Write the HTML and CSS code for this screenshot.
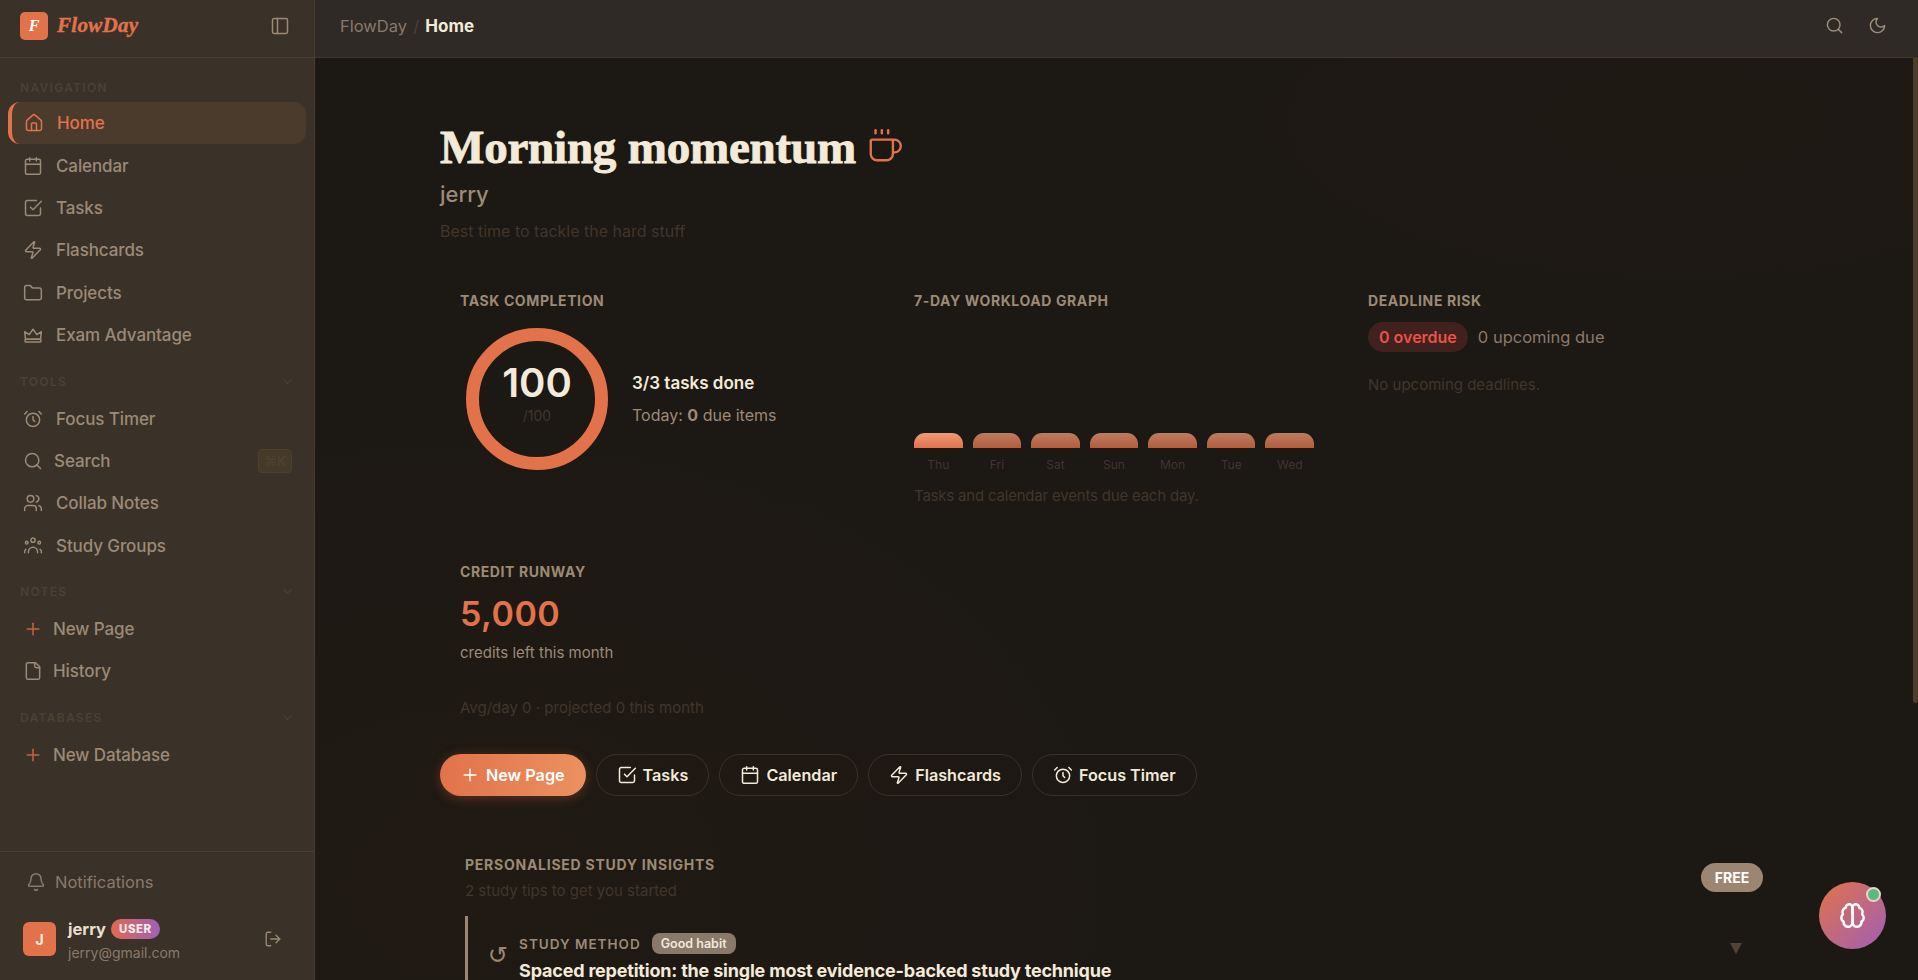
FILE: index.html
```html
<!doctype html>
<html lang="en">
<head>
  <meta charset="UTF-8">
  <title>FlowDay</title>
  <link rel="stylesheet" href="styles.css">
</head>
<body>
<svg class="sprite" xmlns="http://www.w3.org/2000/svg">
  <symbol id="i-home" viewBox="0 0 24 24"><path d="M15 21v-8a1 1 0 0 0-1-1h-4a1 1 0 0 0-1 1v8"/><path d="M3 10a2 2 0 0 1 .709-1.528l7-5.999a2 2 0 0 1 2.582 0l7 5.999A2 2 0 0 1 21 10v9a2 2 0 0 1-2 2H5a2 2 0 0 1-2-2z"/></symbol>
  <symbol id="i-calendar" viewBox="0 0 24 24"><path d="M8 2v4"/><path d="M16 2v4"/><rect x="3" y="4" width="18" height="18" rx="2"/><path d="M3 10h18"/></symbol>
  <symbol id="i-check" viewBox="0 0 24 24"><path d="m9 11 3 3L22 4"/><path d="M21 12v7a2 2 0 0 1-2 2H5a2 2 0 0 1-2-2V5a2 2 0 0 1 2-2h11"/></symbol>
  <symbol id="i-zap" viewBox="0 0 24 24"><path d="M4 14a1 1 0 0 1-.78-1.63l9.9-10.2a.5.5 0 0 1 .86.46l-1.92 6.02A1 1 0 0 0 13 10h7a1 1 0 0 1 .78 1.63l-9.9 10.2a.5.5 0 0 1-.86-.46l1.92-6.02A1 1 0 0 0 11 14z"/></symbol>
  <symbol id="i-folder" viewBox="0 0 24 24"><path d="M20 20a2 2 0 0 0 2-2V8a2 2 0 0 0-2-2h-7.9a2 2 0 0 1-1.69-.9L9.6 3.9A2 2 0 0 0 7.93 3H4a2 2 0 0 0-2 2v13a2 2 0 0 0 2 2Z"/></symbol>
  <symbol id="i-crown" viewBox="0 0 24 24"><path d="M3 17 2 8l5.500 3.500L12 5l4.500 6.500L22 8l-1 9z"/><rect x="2.500" y="17" width="19" height="3.500" rx="1"/></symbol>
  <symbol id="i-alarm" viewBox="0 0 24 24"><circle cx="12" cy="13" r="8"/><path d="M12 9v4l2 2"/><path d="M5 3 2 6"/><path d="m22 6-3-3"/></symbol>
  <symbol id="i-search" viewBox="0 0 24 24"><circle cx="11" cy="11" r="8"/><path d="m21 21-4.300-4.300"/></symbol>
  <symbol id="i-users" viewBox="0 0 24 24"><path d="M16 21v-2a4 4 0 0 0-4-4H6a4 4 0 0 0-4 4v2"/><circle cx="9" cy="7" r="4"/><path d="M22 21v-2a4 4 0 0 0-3-3.870"/><path d="M16 3.130a4 4 0 0 1 0 7.750"/></symbol>
  <symbol id="i-groups" viewBox="0 0 24 24"><circle cx="12" cy="5" r="2.500"/><circle cx="4.500" cy="8" r="1.600"/><circle cx="19.500" cy="8" r="1.600"/><path d="M6.500 20v-1a5.500 5.500 0 0 1 11 0v1"/><path d="M2 20v-1a3.500 3.500 0 0 1 1.500-3"/><path d="M22 20v-1a3.500 3.500 0 0 0-1.500-3"/></symbol>
  <symbol id="i-plus" viewBox="0 0 24 24"><path d="M5 12h14"/><path d="M12 5v14"/></symbol>
  <symbol id="i-file" viewBox="0 0 24 24"><path d="M15 2H6a2 2 0 0 0-2 2v16a2 2 0 0 0 2 2h12a2 2 0 0 0 2-2V7Z"/><path d="M14 2v4a2 2 0 0 0 2 2h4"/></symbol>
  <symbol id="i-bell" viewBox="0 0 24 24"><path d="M10.268 21a2 2 0 0 0 3.464 0"/><path d="M3.262 15.326A1 1 0 0 0 4 17h16a1 1 0 0 0 .74-1.673C19.410 13.956 18 12.499 18 8A6 6 0 0 0 6 8c0 4.499-1.411 5.956-2.738 7.326"/></symbol>
  <symbol id="i-logout" viewBox="0 0 24 24"><path d="M9 21H5a2 2 0 0 1-2-2V5a2 2 0 0 1 2-2h4"/><path d="m16 17 5-5-5-5"/><path d="M21 12H9"/></symbol>
  <symbol id="i-panel" viewBox="0 0 24 24"><rect x="3" y="3" width="18" height="18" rx="2"/><path d="M9 3v18"/></symbol>
  <symbol id="i-moon" viewBox="0 0 24 24"><path d="M12 3a6 6 0 0 0 9 9 9 9 0 1 1-9-9Z"/></symbol>
  <symbol id="i-coffee" viewBox="0 0 24 24"><path d="M10 2v2"/><path d="M14 2v2"/><path d="M16 8a1 1 0 0 1 1 1v8a4 4 0 0 1-4 4H7a4 4 0 0 1-4-4V9a1 1 0 0 1 1-1h14a4 4 0 1 1 0 8h-1"/><path d="M6 2v2"/></symbol>
  <symbol id="i-brain" viewBox="0 0 24 24"><path d="M12 5a3 3 0 1 0-5.997.125 4 4 0 0 0-2.526 5.770 4 4 0 0 0 .556 6.588A4 4 0 1 0 12 18Z"/><path d="M12 5a3 3 0 1 1 5.997.125 4 4 0 0 1 2.526 5.770 4 4 0 0 1-.556 6.588A4 4 0 1 1 12 18Z"/></symbol>
  <symbol id="i-chevron" viewBox="0 0 24 24"><path d="m6 9 6 6 6-6"/></symbol>
</svg>

<div class="app">
  <aside class="sidebar">
    <div class="brand">
      <div class="logo">F</div>
      <div class="brand-name">FlowDay</div>
      <svg class="icon panel-btn"><use href="#i-panel"/></svg>
    </div>

    <nav class="side-nav">
      <div class="side-label first">NAVIGATION</div>
      <a href="#" class="nav-item active"><svg class="icon"><use href="#i-home"/></svg>Home</a>
      <a href="#" class="nav-item"><svg class="icon"><use href="#i-calendar"/></svg>Calendar</a>
      <a href="#" class="nav-item"><svg class="icon"><use href="#i-check"/></svg>Tasks</a>
      <a href="#" class="nav-item"><svg class="icon"><use href="#i-zap"/></svg>Flashcards</a>
      <a href="#" class="nav-item"><svg class="icon"><use href="#i-folder"/></svg>Projects</a>
      <a href="#" class="nav-item"><svg class="icon"><use href="#i-crown"/></svg>Exam Advantage</a>

      <div class="side-label">TOOLS<svg class="icon chev"><use href="#i-chevron"/></svg></div>
      <a href="#" class="nav-item"><svg class="icon"><use href="#i-alarm"/></svg>Focus Timer</a>
      <a href="#" class="nav-item tight"><svg class="icon"><use href="#i-search"/></svg>Search<span class="kbd">⌘K</span></a>
      <a href="#" class="nav-item"><svg class="icon"><use href="#i-users"/></svg>Collab Notes</a>
      <a href="#" class="nav-item"><svg class="icon"><use href="#i-groups"/></svg>Study Groups</a>

      <div class="side-label">NOTES<svg class="icon chev"><use href="#i-chevron"/></svg></div>
      <a href="#" class="nav-item sub"><svg class="icon plus"><use href="#i-plus"/></svg>New Page</a>
      <a href="#" class="nav-item sub"><svg class="icon"><use href="#i-file"/></svg>History</a>

      <div class="side-label">DATABASES<svg class="icon chev"><use href="#i-chevron"/></svg></div>
      <a href="#" class="nav-item sub"><svg class="icon plus"><use href="#i-plus"/></svg>New Database</a>
    </nav>

    <div class="side-foot">
      <a href="#" class="notif"><svg class="icon"><use href="#i-bell"/></svg>Notifications</a>
      <div class="user">
        <div class="avatar">J</div>
        <div class="user-info">
          <div class="user-name">jerry <span class="role">USER</span></div>
          <div class="user-mail">jerry@gmail.com</div>
        </div>
        <svg class="icon logout"><use href="#i-logout"/></svg>
      </div>
    </div>
  </aside>

  <div class="main">
    <header class="topbar">
      <div class="crumbs">FlowDay <span class="sep">/</span> <b>Home</b></div>
      <div class="top-actions">
        <svg class="icon"><use href="#i-search"/></svg>
        <svg class="icon"><use href="#i-moon"/></svg>
      </div>
    </header>

    <div class="scroller">
      <div class="scroll-thumb"></div>
      <div class="content">
        <h1 class="title">Morning momentum <svg class="icon cup"><use href="#i-coffee"/></svg></h1>
        <div class="hello">jerry</div>
        <div class="tagline">Best time to tackle the hard stuff</div>

        <div class="cards">
          <section class="card">
            <h3 class="card-label">TASK COMPLETION</h3>
            <div class="completion">
              <div class="ring">
                <div class="ring-num">100</div>
                <div class="ring-max">/100</div>
              </div>
              <div>
                <div class="done">3/3 tasks done</div>
                <div class="today">Today: <b>0</b> due items</div>
              </div>
            </div>
          </section>

          <section class="card">
            <h3 class="card-label">7-DAY WORKLOAD GRAPH</h3>
            <div class="graph">
              <div class="day today-bar"><i></i>Thu</div>
              <div class="day"><i></i>Fri</div>
              <div class="day"><i></i>Sat</div>
              <div class="day"><i></i>Sun</div>
              <div class="day"><i></i>Mon</div>
              <div class="day"><i></i>Tue</div>
              <div class="day"><i></i>Wed</div>
            </div>
            <div class="muted graph-note">Tasks and calendar events due each day.</div>
          </section>

          <section class="card">
            <h3 class="card-label">DEADLINE RISK</h3>
            <div class="risk">
              <span class="overdue">0 overdue</span>
              <span class="upcoming">0 upcoming due</span>
            </div>
            <div class="muted no-deadlines">No upcoming deadlines.</div>
          </section>

          <section class="card">
            <h3 class="card-label">CREDIT RUNWAY</h3>
            <div class="credits">5,000</div>
            <div class="credits-sub">credits left this month</div>
            <div class="muted credits-avg">Avg/day 0 · projected 0 this month</div>
          </section>
        </div>

        <div class="quick">
          <a href="#" class="btn primary"><svg class="icon"><use href="#i-plus"/></svg>New Page</a>
          <a href="#" class="btn"><svg class="icon"><use href="#i-check"/></svg>Tasks</a>
          <a href="#" class="btn"><svg class="icon"><use href="#i-calendar"/></svg>Calendar</a>
          <a href="#" class="btn"><svg class="icon"><use href="#i-zap"/></svg>Flashcards</a>
          <a href="#" class="btn"><svg class="icon"><use href="#i-alarm"/></svg>Focus Timer</a>
        </div>

        <section class="insights">
          <div class="ins-head">
            <div>
              <h3 class="card-label">PERSONALISED STUDY INSIGHTS</h3>
              <div class="muted ins-sub">2 study tips to get you started</div>
            </div>
            <span class="free">FREE</span>
          </div>
          <div class="tip">
            <span class="tip-icon">↺</span>
            <div class="tip-body">
              <div class="tip-meta">STUDY METHOD <span class="habit">Good habit</span></div>
              <div class="tip-title">Spaced repetition: the single most evidence-backed study technique</div>
            </div>
            <span class="tip-arrow"></span>
          </div>
        </section>
      </div>
    </div>
  </div>
</div>

<button class="fab">
  <svg class="icon"><use href="#i-brain"/></svg>
  <span class="fab-dot"></span>
</button>
</body>
</html>
```

FILE: styles.css
```css
* {
  box-sizing: border-box;
}
html, body {
  margin: 0;
  height: 100%;
  overflow: hidden;
}
body {
  background: #1c1813;
  color: #f3ead9;
  font-family: "Inter", "Noto Sans", sans-serif;
}
a {
  color: inherit;
  text-decoration: none;
}
h1, h3 {
  margin: 0;
}
.sprite {
  display: none;
}
.icon {
  width: 20px;
  height: 20px;
  fill: none;
  stroke: currentColor;
  stroke-width: 1.8;
  stroke-linecap: round;
  stroke-linejoin: round;
  flex: none;
}
.app {
  display: flex;
  height: 100vh;
}

/* sidebar */
.sidebar {
  width: 315px;
  flex: none;
  display: flex;
  flex-direction: column;
  background: #3a3129;
  border-right: 1px solid #4a3e31;
  color: #9c8a76;
}
.brand {
  height: 58px;
  flex: none;
  display: flex;
  align-items: center;
  padding: 0 20px 6px;
  border-bottom: 1px solid #4a3e31;
}
.logo {
  width: 28px;
  height: 28px;
  border-radius: 5px;
  background: #e2724a;
  color: #fff;
  font: italic bold 16px "Liberation Serif", serif;
  display: flex;
  align-items: center;
  justify-content: center;
}
.brand-name {
  margin-left: 9px;
  font: italic bold 21px "Liberation Serif", serif;
  letter-spacing: 0.3px;
  color: #e2724a;
  -webkit-text-stroke: 0.4px #e2724a;
}
.panel-btn {
  margin-left: auto;
  margin-right: 4px;
}
.side-nav {
  flex: 1;
  padding: 0 8px;
}
.side-label {
  height: 20px;
  margin: 15px 0 6px;
  padding: 0 12px;
  display: flex;
  align-items: center;
  justify-content: space-between;
  font-size: 12px;
  font-weight: 600;
  letter-spacing: 1.3px;
  color: #4c4134;
}
.side-label.first {
  margin: 19px 0 5px;
}
.chev {
  width: 15px;
  height: 15px;
  margin-right: -1px;
}
.nav-item {
  height: 42.4px;
  padding: 0 15px;
  display: flex;
  align-items: center;
  gap: 13px;
  font-size: 17px;
  font-weight: 500;
  border-radius: 12px;
  letter-spacing: -0.1px;
}
.nav-item.tight {
  gap: 11px;
}
.nav-item.sub {
  gap: 10px;
}
.nav-item .plus {
  color: #c9633f;
}
.nav-item.active {
  background: #4a3b2c;
  color: #e2724a;
  border-left: 4px solid #e2724a;
  padding-left: 12px;
}
.kbd {
  margin-left: auto;
  margin-right: -1px;
  width: 34px;
  height: 24px;
  border: 1px solid #4e4030;
  border-radius: 4px;
  background: #45392a;
  color: #4f4232;
  font-size: 13px;
  text-align: center;
  line-height: 22px;
}
.side-foot {
  flex: none;
  height: 129px;
  border-top: 1px solid #4a3e31;
}
.notif {
  height: 60px;
  padding: 0 26px;
  display: flex;
  align-items: center;
  gap: 9px;
  font-size: 16.500px;
  font-weight: 400;
  color: #8a796a;
}
.user {
  display: flex;
  align-items: center;
  padding-left: 23px;
  margin-top: 5px;
}
.avatar {
  width: 33px;
  height: 34px;
  border-radius: 6px;
  background: #e2724a;
  color: #f8efe2;
  font-size: 14px;
  font-weight: 700;
  display: flex;
  align-items: center;
  justify-content: center;
}
.user-info {
  margin-left: 12px;
  padding-top: 2px;
}
.user-name {
  display: flex;
  align-items: center;
  gap: 5px;
  font-size: 16.500px;
  font-weight: 700;
  color: #e9dfce;
  line-height: 20px;
}
.role {
  font-size: 11.500px;
  font-weight: 800;
  letter-spacing: 0.5px;
  color: #f6ece4;
  padding: 0 8px;
  height: 20px;
  line-height: 20px;
  border-radius: 10px;
  background: linear-gradient(90deg, #df6a52, #a05fb5);
}
.user-mail {
  margin-top: 5px;
  font-size: 14px;
  color: #8a796a;
}
.logout {
  margin-left: auto;
  margin-right: 32px;
  width: 18px;
  height: 18px;
}

/* main area */
.main {
  flex: 1;
  min-width: 0;
  display: flex;
  flex-direction: column;
}
.topbar {
  height: 58px;
  flex: none;
  display: flex;
  align-items: center;
  justify-content: space-between;
  padding: 0 31px 6px 25px;
  background: #2f2a25;
  border-bottom: 1px solid #40362b;
}
.crumbs {
  font-size: 16.500px;
  color: #8a796a;
}
.crumbs .sep {
  color: #4c4134;
  margin: 0 1.500px;
}
.crumbs b {
  color: #f3ead9;
  font-size: 17px;
  font-weight: 700;
}
.top-actions {
  display: flex;
  gap: 24px;
  color: #a08d7b;
}
.top-actions .icon {
  width: 19px;
  height: 19px;
}
.scroller {
  flex: 1;
  min-height: 0;
  position: relative;
  overflow: hidden;
  background:
    radial-gradient(ellipse 500px 200px at 85% 60px, rgba(70, 38, 20, 0.06), transparent),
    radial-gradient(ellipse 700px 500px at 10% 90%, rgba(80, 45, 20, 0.08), transparent);
}
.scroll-thumb {
  position: absolute;
  top: 0;
  right: 0;
  width: 5px;
  height: 645px;
  background: #4d3d28;
  border-radius: 0 0 3px 3px;
}
.content {
  width: 1348px;
  margin-left: 125px;
  padding-top: 60px;
}
.title {
  height: 58px;
  display: flex;
  align-items: center;
  gap: 10px;
  font: bold 47px "Liberation Serif", serif;
  letter-spacing: -0.2px;
  color: #f3ead9;
  -webkit-text-stroke: 0.9px #f3ead9;
}
.cup {
  width: 38px;
  height: 38px;
  color: #e2724a;
  stroke-width: 1.5;
  margin-top: -2px;
}
.hello {
  margin-top: 3px;
  font-size: 22px;
  line-height: 30px;
  font-weight: 500;
  color: #9c8a76;
}
.tagline {
  margin-top: 11px;
  font-size: 16px;
  line-height: 22px;
  color: #40362b;
}
.cards {
  margin-top: 30px;
  display: grid;
  grid-template-columns: repeat(3, 440px);
  gap: 14px;
}
.card {
  padding: 20px;
  height: 257px;
}
.card:last-child {
  height: 184px;
}
.card-label {
  font-size: 14px;
  line-height: 18px;
  font-weight: 700;
  letter-spacing: 0.6px;
  color: #9c8a76;
}
.muted {
  color: #40362b;
  font-size: 15px;
}
.completion {
  margin-top: 18px;
  margin-left: 6px;
  display: flex;
  align-items: center;
  gap: 24px;
}
.ring {
  width: 142px;
  height: 142px;
  border-radius: 50%;
  border: 13px solid #e2724a;
  display: flex;
  flex-direction: column;
  align-items: center;
  padding-top: 18px;
}
.ring-num {
  font-size: 40px;
  line-height: 48px;
  font-weight: 600;
}
.ring-max {
  font-size: 14px;
  color: #40362b;
}
.done {
  font-size: 17px;
  font-weight: 600;
}
.today {
  margin-top: 12px;
  font-size: 16px;
  color: #9c8a76;
}
.today b {
  font-weight: 700;
}
.graph {
  margin-top: 123px;
  width: 400px;
  display: flex;
  gap: 10px;
}
.day {
  flex: 1;
  text-align: center;
  font-size: 12px;
  color: #40362b;
}
.day i {
  display: block;
  height: 15px;
  margin-bottom: 9px;
  border-radius: 11px 11px 0 0;
  background: linear-gradient(180deg, #bb7d62, #b55c39);
}
.today-bar i {
  background: linear-gradient(180deg, #ee9a78, #e2724a);
}
.graph-note {
  margin-top: 14px;
  letter-spacing: -0.2px;
}
.risk {
  margin-top: 12px;
  display: flex;
  align-items: center;
  gap: 10px;
}
.overdue {
  height: 30px;
  line-height: 30px;
  padding: 0 11px;
  border-radius: 15px;
  background: #40211d;
  color: #e8524a;
  font-size: 16px;
  font-weight: 600;
}
.upcoming {
  font-size: 16.500px;
  color: #8a796a;
}
.no-deadlines {
  margin-top: 23px;
}
.credits {
  margin-top: 12px;
  font-size: 34px;
  line-height: 42px;
  font-weight: 600;
  letter-spacing: 0.5px;
  color: #e2724a;
}
.credits-sub {
  margin-top: 8px;
  font-size: 15px;
  color: #9c8a76;
}
.credits-avg {
  margin-top: 36px;
}
.quick {
  margin-top: 27px;
  display: flex;
  gap: 10px;
}
.btn {
  height: 42px;
  padding: 0 20px;
  display: flex;
  align-items: center;
  gap: 6px;
  border-radius: 21px;
  border: 1px solid #3b3023;
  font-size: 16.200px;
  font-weight: 600;
  color: #f3ead9;
}
.btn .icon {
  width: 20px;
  height: 20px;
}
.btn.primary {
  padding: 0 21px 0 20px;
  gap: 6px;
  border: 0;
  color: #fff;
  background: linear-gradient(90deg, #e2724a, #eb9160);
  box-shadow: 0 2px 12px rgba(226, 114, 74, 0.3);
}
.insights {
  margin-top: 60px;
  width: 1323px;
  padding-left: 25px;
}
.ins-head {
  display: flex;
  justify-content: space-between;
  align-items: flex-start;
}
.ins-head .card-label {
  letter-spacing: 0.75px;
}
.ins-sub {
  margin-top: 7px;
}
.free {
  margin-top: 7px;
  width: 62px;
  height: 29px;
  line-height: 29px;
  text-align: center;
  border-radius: 15px;
  background: #9c8672;
  color: #fff;
  font-size: 14px;
  font-weight: 700;
}
.tip {
  margin-top: 16px;
  border-left: 3px solid #9c8672;
  padding: 17px 20px 0 20px;
  display: flex;
  height: 120px;
  align-items: flex-start;
  gap: 11px;
}
.tip-icon {
  margin-top: 8px;
  font: 24px "DejaVu Sans", sans-serif;
  color: #9c8672;
}
.tip-body {
  flex: 1;
}
.tip-meta {
  display: flex;
  align-items: center;
  gap: 11px;
  font-size: 13.500px;
  font-weight: 600;
  letter-spacing: 1px;
  color: #9c8a76;
}
.habit {
  padding: 0 9px;
  height: 21px;
  line-height: 21px;
  border-radius: 8px;
  background: #8a796a;
  color: #f0e8dc;
  font-size: 12.500px;
  font-weight: 600;
  letter-spacing: 0;
}
.tip-title {
  margin-top: 6px;
  font-size: 18px;
  font-weight: 700;
  letter-spacing: -0.2px;
  color: #f3ead9;
}
.tip-arrow {
  margin: 10px 1px 0 0;
  width: 0;
  height: 0;
  border-left: 6px solid transparent;
  border-right: 6px solid transparent;
  border-top: 11px solid #4f4436;
}

/* floating assistant */
.fab {
  position: fixed;
  right: 32px;
  bottom: 31px;
  width: 67px;
  height: 67px;
  border: 0;
  border-radius: 50%;
  color: #fff;
  background: linear-gradient(135deg, #e2724a, #a05fb5);
  display: flex;
  align-items: center;
  justify-content: center;
}
.fab .icon {
  width: 27px;
  height: 27px;
  stroke-width: 2.2;
}
.fab-dot {
  position: absolute;
  top: 5px;
  right: 5px;
  width: 15px;
  height: 15px;
  border-radius: 50%;
  background: #5bb97f;
  border: 2px solid #e8d5cc;
}
```
